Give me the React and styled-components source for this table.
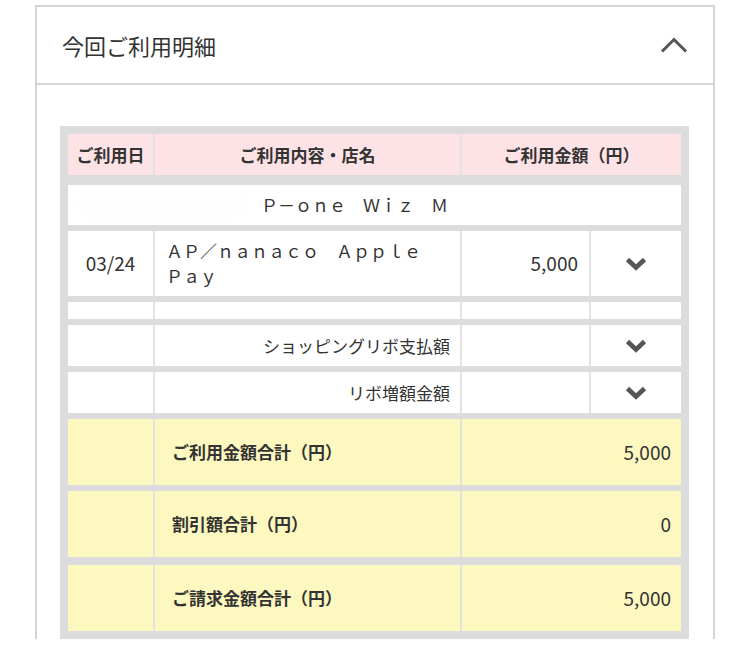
import React from "react";
import styled, { createGlobalStyle } from "styled-components";

const GlobalStyle = createGlobalStyle`
  body {
    margin: 0;
    background: #fff;
    color: #333;
    font-family: "Noto Sans CJK JP", "Noto Sans", sans-serif;
  }
`;

const Page = styled.div`
  padding: 5px 35px 0;
`;

const Panel = styled.section`
  border: 2px solid #d4d4d4;
  border-bottom: none;
  background: #fff;
`;

const PanelHeader = styled.header`
  height: 76px;
  display: flex;
  align-items: center;
  justify-content: space-between;
  padding: 0 25px;
  border-bottom: 2px solid #d4d4d4;
`;

const Title = styled.h2`
  margin: 0;
  font-size: 22px;
  font-weight: 400;
  color: #333;
`;

const PanelBody = styled.div`
  padding: 41px 24px 0 23px;
`;

const Table = styled.div`
  display: flex;
  flex-direction: column;
  gap: 6px;
  padding: 8px;
  background: #dcdcdc;
`;

const COLS = {
  four: "85px 307px 129px 92px",
  three: "85px 307px 221px",
  one: "1fr",
};

const BG = {
  head: "#fde3e5",
  plain: "#fff",
  total: "#fdf8bf",
};

const Row = styled.div`
  display: grid;
  grid-template-columns: ${p => COLS[p.cols]};
  height: ${p => p.h}px;
  background: ${p => BG[p.tone]};
  margin-bottom: ${p => p.after || 0}px;
`;

const Cell = styled.div`
  display: flex;
  align-items: center;
  justify-content: ${p => p.align || "flex-start"};
  padding: ${p => p.pad || "0 11px"};
  border-left: ${p => (p.first ? "none" : "2px solid #e2e2e2")};
  font-size: ${p => p.size || 17}px;
  font-weight: ${p => (p.bold ? 700 : 400)};
  line-height: ${p => p.lh || 1.4};
  color: #333;
  min-width: 0;
`;

const Wide = styled.span`
  word-break: break-all;
`;

const Redacted = styled.span`
  display: inline-block;
  width: 168px;
  height: 24px;
  margin-right: 14px;
  border-radius: 12px;
  background: #fdfdfd;
  filter: blur(2px);
`;

const ChevronDown = () => (
  <svg width="24" height="16" viewBox="0 0 24 16">
    <polyline
      points="3.5,3.5 12,11.5 20.5,3.5"
      fill="none"
      stroke="#555"
      strokeWidth="4.6"
      strokeLinejoin="miter"
    />
  </svg>
);

const ChevronUp = () => (
  <svg width="28" height="18" viewBox="0 0 28 18">
    <polyline
      points="2,15.5 14,3.5 26,15.5"
      fill="none"
      stroke="#555"
      strokeWidth="3"
    />
  </svg>
);

export default function App() {
  return (
    <Page>
      <GlobalStyle />
      <Panel>
        <PanelHeader>
          <Title>今回ご利用明細</Title>
          <ChevronUp />
        </PanelHeader>
        <PanelBody>
          <Table>
            <Row cols="three" tone="head" h={41} after={4}>
              <Cell first bold align="center" pad="0">ご利用日</Cell>
              <Cell bold align="center">ご利用内容・店名</Cell>
              <Cell bold align="center">ご利用金額（円）</Cell>
            </Row>

            <Row cols="one" tone="plain" h={40}>
              <Cell first pad="0 11px">
                <Redacted />
                <Wide>Ｐ－ｏｎｅ　Ｗｉｚ　Ｍ</Wide>
              </Cell>
            </Row>

            <Row cols="four" tone="plain" h={65}>
              <Cell first align="center" size={19} pad="0">03/24</Cell>
              <Cell lh={1.42}>
                <Wide>ＡＰ／ｎａｎａｃｏ　Ａｐｐｌｅ　Ｐａｙ</Wide>
              </Cell>
              <Cell align="flex-end" size={19}>5,000</Cell>
              <Cell align="center" pad="0"><ChevronDown /></Cell>
            </Row>

            <Row cols="four" tone="plain" h={17}>
              <Cell first />
              <Cell />
              <Cell />
              <Cell />
            </Row>

            <Row cols="four" tone="plain" h={41}>
              <Cell first />
              <Cell align="flex-end" pad="0 10px">ショッピングリボ支払額</Cell>
              <Cell />
              <Cell align="center" pad="0"><ChevronDown /></Cell>
            </Row>

            <Row cols="four" tone="plain" h={41}>
              <Cell first />
              <Cell align="flex-end" pad="0 10px">リボ増額金額</Cell>
              <Cell />
              <Cell align="center" pad="0"><ChevronDown /></Cell>
            </Row>

            <Row cols="three" tone="total" h={66}>
              <Cell first />
              <Cell bold pad="0 17px">ご利用金額合計（円）</Cell>
              <Cell align="flex-end" size={19} pad="0 10px">5,000</Cell>
            </Row>

            <Row cols="three" tone="total" h={66} after={2}>
              <Cell first />
              <Cell bold pad="0 17px">割引額合計（円）</Cell>
              <Cell align="flex-end" size={19} pad="0 10px">0</Cell>
            </Row>

            <Row cols="three" tone="total" h={66}>
              <Cell first />
              <Cell bold pad="0 17px">ご請求金額合計（円）</Cell>
              <Cell align="flex-end" size={19} pad="0 10px">5,000</Cell>
            </Row>
          </Table>
        </PanelBody>
      </Panel>
    </Page>
  );
}
